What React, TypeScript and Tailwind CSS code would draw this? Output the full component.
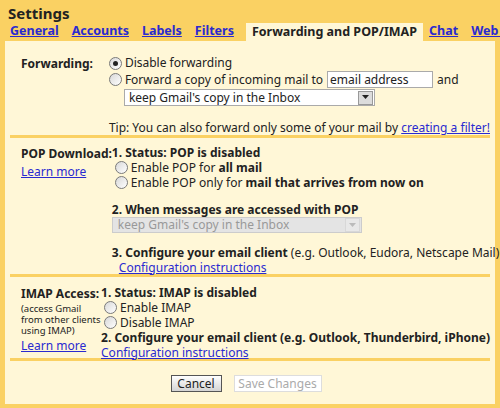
import React from "react";

const Radio = ({ checked }: { checked?: boolean }) => (
  <span className="mr-[3px] inline-flex h-[13px] w-[13px] shrink-0 items-center justify-center rounded-full border border-[#7a7a7a] bg-gradient-to-br from-[#d8d8d8] to-white">
    {checked && <span className="h-[5px] w-[5px] rounded-full bg-[#222]" />}
  </span>
);

const Row = ({ children, h = "h-[15px]", cls = "" }: { children: React.ReactNode; h?: string; cls?: string }) => (
  <div className={`flex items-center whitespace-nowrap ${h} ${cls}`}>{children}</div>
);

const Arrow = ({ disabled }: { disabled?: boolean }) => (
  <span className={`ml-auto flex h-[14px] w-[15px] items-center justify-center border ${disabled ? "border-[#d8d8d8] bg-[#e8e8e8]" : "border-[#999] bg-[#dcdcdc]"}`}>
    <svg width="7" height="5" viewBox="0 0 7 5"><path d="M0 0h7L3.5 4z" fill={disabled ? "#bbb" : "#222"} /></svg>
  </span>
);

export default function App() {
  return (
    <div className="h-[408px] w-[500px] whitespace-nowrap bg-[#fad163] px-[5px] pt-[3px] font-['Liberation_Sans',Arial,sans-serif] text-[12px] text-[#222]">
      <div className="h-[20px] pl-[3px] text-[15px] font-bold leading-[20px]">Settings</div>
      <div className="flex h-[18px] items-end pl-[5px] text-[12.5px] font-bold">
        {["General", "Accounts", "Labels", "Filters"].map((t) => (
          <a key={t} className="mr-[13px] text-[#2a2ad0] underline">{t}</a>
        ))}
        <span className="-ml-[1px] mr-[6px] h-[18px] bg-[#fff7d7] px-[6px] leading-[18px] text-[#222]">Forwarding and POP/IMAP</span>
        <a className="mr-[13px] text-[#2a2ad0] underline">Chat</a>
        <a className="text-[#2a2ad0] underline">Web Clips</a>
      </div>
      <div className="h-[363px] bg-[#fff7d7] px-[5px]">
        <div className="flex h-[97px] border-b-[3px] border-[#fad163] pt-[14px]">
          <div className="w-[139px] pl-[11px] font-bold">Forwarding:</div>
          <div>
            <Row h="h-[16px]"><Radio checked />Disable forwarding</Row>
            <Row h="h-[17px]">
              <Radio />Forward a copy of incoming mail to
              <span className="ml-[4px] h-[17px] w-[106px] border border-[#aaa] bg-white px-[2px] leading-[15px]">email address</span>
              <span className="ml-[4px]">and</span>
            </Row>
            <div className="ml-[15px] mt-[1px] flex h-[17px] w-[251px] items-center border border-[#aaa] bg-white pl-[4px] pr-[1px]">
              keep Gmail's copy in the Inbox<Arrow />
            </div>
            <div className="mt-[13px]">Tip: You can also forward only some of your mail by <a className="text-[#2a2ad0] underline">creating a filter!</a></div>
          </div>
        </div>
        <div className="flex h-[139px] border-b-[3px] border-[#fad163] pt-[7px]">
          <div className="w-[137px] pl-[11px]">
            <div className="font-bold">POP Download:</div>
            <a className="text-[#2a2ad0] underline">Learn more</a>
          </div>
          <div>
            <Row cls="font-bold">1. Status: POP is disabled</Row>
            <Row cls="ml-[3px]"><Radio />Enable POP for&nbsp;<b>all mail</b></Row>
            <Row cls="ml-[3px]"><Radio />Enable POP only for&nbsp;<b>mail that arrives from now on</b></Row>
            <Row cls="mt-[12px] font-bold">2. When messages are accessed with POP</Row>
            <div className="flex h-[16px] w-[250px] items-center border border-[#ccc] bg-[#e4e4e4] pl-[5px] pr-[1px] text-[#999]">
              keep Gmail's copy in the Inbox<Arrow disabled />
            </div>
            <Row cls="mt-[12px]"><b>3. Configure your email client</b>&nbsp;(e.g. Outlook, Eudora, Netscape Mail)</Row>
            <Row cls="ml-[7px]"><a className="text-[#2a2ad0] underline">Configuration instructions</a></Row>
          </div>
        </div>
        <div className="flex h-[84px] border-b-[3px] border-[#fad163] pt-[8px]">
          <div className="w-[137px] pl-[11px]">
            <div className="font-bold">IMAP Access:</div>
            <div className="w-[80px] whitespace-normal text-[9.5px] leading-[11px]">(access Gmail from other clients using IMAP)</div>
            <a className="mt-[1px] block text-[#2a2ad0] underline">Learn more</a>
          </div>
          <div>
            <Row cls="font-bold">1. Status: IMAP is disabled</Row>
            <Row cls="ml-[3px]"><Radio />Enable IMAP</Row>
            <Row cls="ml-[3px]"><Radio />Disable IMAP</Row>
            <Row cls="font-bold">2. Configure your email client (e.g. Outlook, Thunderbird, iPhone)</Row>
            <Row><a className="text-[#2a2ad0] underline">Configuration instructions</a></Row>
          </div>
        </div>
        <div className="flex justify-center gap-[12px] pt-[14px] pr-[8px]">
          <button className="h-[17px] w-[51px] border border-[#555] bg-gradient-to-b from-white to-[#d4d4d4] text-[12px] leading-[15px]">Cancel</button>
          <button className="h-[17px] w-[88px] border border-[#ddd] bg-white text-[12px] leading-[15px] text-[#aaa]">Save Changes</button>
        </div>
      </div>
    </div>
  );
}
